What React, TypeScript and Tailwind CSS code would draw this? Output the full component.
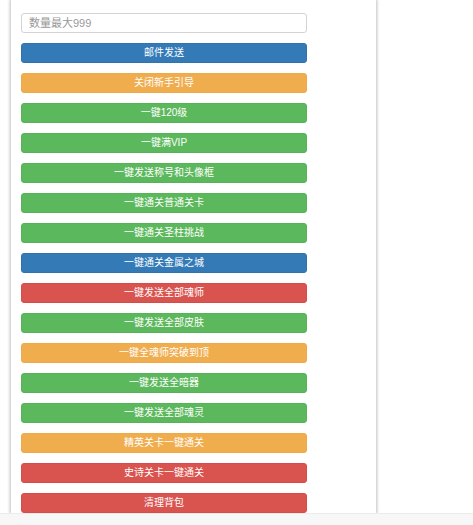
import React, { useState } from 'react';

type Tone = 'primary' | 'warning' | 'success' | 'danger';

const toneClass: Record<Tone, string> = {
	primary: 'bg-[#337ab7] border-[#3174ad]',
	warning: 'bg-[#f0ad4e] border-[#efa948]',
	success: 'bg-[#5cb85c] border-[#56b456]',
	danger: 'bg-[#d9534f] border-[#d74c48]',
};

const actions: { label: string; tone: Tone }[] = [
	{ label: '邮件发送', tone: 'primary' },
	{ label: '关闭新手引导', tone: 'warning' },
	{ label: '一键120级', tone: 'success' },
	{ label: '一键满VIP', tone: 'success' },
	{ label: '一键发送称号和头像框', tone: 'success' },
	{ label: '一键通关普通关卡', tone: 'success' },
	{ label: '一键通关圣柱挑战', tone: 'success' },
	{ label: '一键通关金属之城', tone: 'primary' },
	{ label: '一键发送全部魂师', tone: 'danger' },
	{ label: '一键发送全部皮肤', tone: 'success' },
	{ label: '一键全魂师突破到顶', tone: 'warning' },
	{ label: '一键发送全暗器', tone: 'success' },
	{ label: '一键发送全部魂灵', tone: 'success' },
	{ label: '精英关卡一键通关', tone: 'warning' },
	{ label: '史诗关卡一键通关', tone: 'danger' },
	{ label: '清理背包', tone: 'danger' },
];

const ActionButton: React.FunctionComponent<{ label: string; tone: Tone }> = ({ label, tone }) => (
	<button
		type="button"
		className={`h-[20px] w-full rounded-[3px] border text-[10px] leading-none text-white ${toneClass[tone]}`}
	>
		{label}
	</button>
);

export default function App() {
	const [count, setCount] = useState('');

	return (
		<div
			className="flex h-[525px] w-[473px] flex-col overflow-hidden bg-white"
			style={{ fontFamily: '"Liberation Sans", "Noto Sans CJK SC", sans-serif' }}
		>
			<div className="flex-1 overflow-hidden">
				<div className="ml-[11px] h-full w-[365px] bg-white pt-[13px] pl-[10px] shadow-[0_0_3px_1px_rgba(0,0,0,0.25)]">
					<div className="flex w-[286px] flex-col gap-[10px]">
						<input
							className="h-[20px] w-full rounded-[3px] border border-[#d4d4d4] px-[7px] text-[11px] text-[#555] placeholder-[#999] focus:outline-none"
							placeholder="数量最大999"
							value={count}
							onChange={e => setCount(e.target.value)}
						/>
						{actions.map(a => (
							<ActionButton key={a.label} label={a.label} tone={a.tone} />
						))}
					</div>
				</div>
			</div>
			<div className="h-[12px] shrink-0 border-t border-[#ececec] bg-[#f7f7f7]" />
		</div>
	);
}
